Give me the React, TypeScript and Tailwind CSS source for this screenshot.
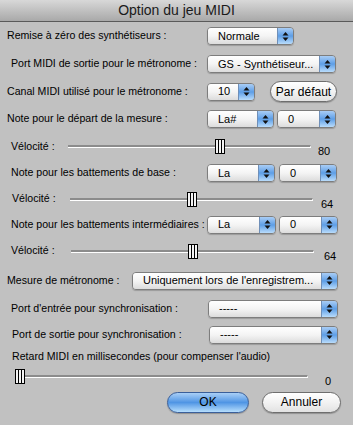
import React from "react";

const font = { fontFamily: '"Liberation Sans", Arial, sans-serif' };

function Arrows() {
  return (
    <svg width="7" height="11" viewBox="0 0 7 11">
      <path d="M3.5 1 L6.5 4.5 L0.5 4.5 Z" fill="#111" />
      <path d="M3.5 10 L6.5 6.5 L0.5 6.5 Z" fill="#111" />
    </svg>
  );
}

function Popup({ text, w }: { text: string; w: string }) {
  return (
    <div
      className={
        "flex h-[18px] items-stretch rounded-[4px] border border-[#7d7d7d] overflow-hidden shadow-[0_1px_1px_rgba(0,0,0,0.2)] " +
        w
      }
    >
      <div className="flex-1 flex items-center pl-[10px] bg-gradient-to-b from-[#ffffff] via-[#f4f4f4] to-[#dcdcdc] text-[11px] text-black whitespace-nowrap overflow-hidden">
        {text}
      </div>
      <div className="w-[16px] flex items-center justify-center border-l border-[#6f8fb8] bg-gradient-to-b from-[#a9cdf5] via-[#5d9ee6] to-[#b9dcfb]">
        <Arrows />
      </div>
    </div>
  );
}

function Slider({
  value,
  track,
  valueText,
  gap,
}: {
  value: number;
  track: string;
  valueText: string;
  gap: number;
}) {
  return (
    <div className={"relative h-[15px] flex items-center shrink-0 " + track}>
      <div className="w-full h-[3px] border-t-2 border-[#8c8c8c] border-b border-b-white border-r border-r-white" />
      <div
        className="absolute top-0 w-[10px] h-[15px] border border-black bg-[#f4f4f4] flex justify-evenly"
        style={{ left: `calc(${(value / 127) * 100}% - ${(value / 127) * 10}px)` }}
      >
        <div className="w-px h-full bg-black" />
        <div className="w-px h-full bg-black" />
      </div>
      <span
        className="absolute left-full top-[4px] text-[11px] text-black"
        style={{ marginLeft: gap }}
      >
        {valueText}
      </span>
    </div>
  );
}

function Pill({ label, blue, w }: { label: string; blue?: boolean; w: string }) {
  return (
    <div
      className={
        "h-[21px] rounded-full border flex items-center justify-center text-[12px] text-black shadow-[0_1px_1px_rgba(0,0,0,0.25)] " +
        (blue
          ? "border-[#3a5f9a] bg-gradient-to-b from-[#a9cff6] via-[#4f95e4] to-[#b6defc] "
          : "border-[#6e6e6e] bg-gradient-to-b from-[#ffffff] via-[#f2f2f2] to-[#e2e2e2] ") +
        w
      }
    >
      {label}
    </div>
  );
}

export default function App() {
  return (
    <div
      className="w-[353px] h-[425px] bg-[#c1c1c1] flex flex-col text-[10.6px] text-black overflow-hidden whitespace-nowrap"
      style={font}
    >
      <div className="h-[22px] shrink-0 flex items-center justify-center bg-gradient-to-b from-[#d8d8d8] to-[#a9a9a9] border-b border-[#5a5a5a] text-[14px] text-[#1a1a1a]">
        Option du jeu MIDI
      </div>

      <div className="h-[28px] flex items-center">
        <div className="w-[207px] pl-[7px]">Remise à zéro des synthétiseurs :</div>
        <Popup text="Normale" w="w-[87px]" />
      </div>

      <div className="h-[28px] flex items-center">
        <div className="w-[207px] pl-[11px]">Port MIDI de sortie pour le métronome :</div>
        <Popup text="GS - Synthétiseur..." w="w-[129px]" />
      </div>

      <div className="h-[27px] flex items-center">
        <div className="w-[207px] pl-[7px]">Canal MIDI utilisé pour le métronome :</div>
        <Popup text="10" w="w-[48px]" />
        <div className="ml-[15px]">
          <Pill label="Par défaut" w="w-[67px]" />
        </div>
      </div>

      <div className="h-[28px] flex items-center">
        <div className="w-[207px] pl-[7px]">Note pour le départ de la mesure :</div>
        <Popup text="La#" w="w-[67px]" />
        <div className="ml-[3px]">
          <Popup text="0" w="w-[59px]" />
        </div>
      </div>

      <div className="h-[27px] flex items-center">
        <div className="w-[68px] pl-[11px] shrink-0">Vélocité :</div>
        <Slider value={80} track="w-[243px]" valueText="80" gap={7} />
      </div>

      <div className="h-[26px] flex items-center">
        <div className="w-[207px] pl-[11px]">Note pour les battements de base :</div>
        <Popup text="La" w="w-[68px]" />
        <div className="ml-[4px]">
          <Popup text="0" w="w-[58px]" />
        </div>
      </div>

      <div className="h-[26px] flex items-center">
        <div className="w-[70px] pl-[12px] shrink-0">Vélocité :</div>
        <Slider value={64} track="w-[243px]" valueText="64" gap={8} />
      </div>

      <div className="h-[25px] flex items-center">
        <div className="w-[207px] pl-[11px]">Note pour les battements intermédiaires :</div>
        <Popup text="La" w="w-[69px]" />
        <div className="ml-[3px]">
          <Popup text="0" w="w-[59px]" />
        </div>
      </div>

      <div className="h-[28px] flex items-center">
        <div className="w-[71px] pl-[11px] shrink-0">Vélocité :</div>
        <Slider value={64} track="w-[243px]" valueText="64" gap={10} />
      </div>

      <div className="h-[31px] flex items-center">
        <div className="w-[132px] pl-[7px]">Mesure de métronome :</div>
        <Popup text="Uniquement lors de l'enregistrem..." w="w-[206px]" />
      </div>

      <div className="h-[25px] flex items-center">
        <div className="w-[208px] pl-[11px]">Port d'entrée pour synchronisation :</div>
        <Popup text="-----" w="w-[130px]" />
      </div>

      <div className="h-[27px] flex items-center">
        <div className="w-[209px] pl-[12px]">Port de sortie pour synchronisation :</div>
        <Popup text="-----" w="w-[129px]" />
      </div>

      <div className="h-[17px] flex items-center pl-[12px]">
        Retard MIDI en millisecondes (pour compenser l'audio)
      </div>

      <div className="h-[22px] flex items-center pl-[15px]">
        <Slider value={0} track="w-[293px]" valueText="0" gap={17} />
      </div>

      <div className="h-[30px] flex items-center justify-end pr-[12px] gap-[13px]">
        <Pill label="OK" blue w="w-[82px]" />
        <Pill label="Annuler" w="w-[79px]" />
      </div>
    </div>
  );
}
